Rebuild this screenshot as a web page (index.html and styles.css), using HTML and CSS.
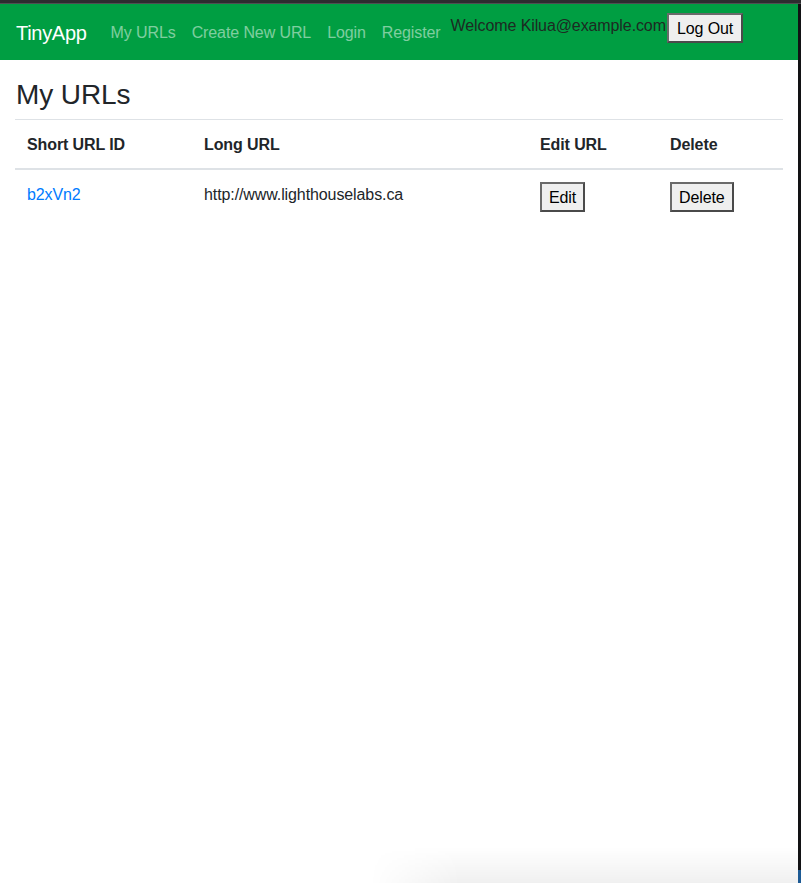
FILE: index.html
```html
<!DOCTYPE html>
<html lang="en">
<head>
<meta charset="utf-8">
<title>TinyApp - My URLs</title>
<link rel="stylesheet" href="styles.css">
</head>
<body>
<div class="window">
  <div class="titlebar"></div>
  <div class="content-row">
    <div class="page">
      <nav class="navbar">
        <a class="brand" href="#">TinyApp</a>
        <ul class="nav-links">
          <li><a href="#">My URLs</a></li>
          <li><a href="#">Create New URL</a></li>
          <li><a href="#">Login</a></li>
          <li><a href="#">Register</a></li>
        </ul>
        <div class="user">
          <span class="welcome">Welcome Kilua@example.com</span>
          <form class="inline-form"><button type="button" class="btn">Log Out</button></form>
        </div>
      </nav>
      <main class="container">
        <h3 class="title">My URLs</h3>
        <table class="url-table">
          <colgroup>
            <col class="c1"><col class="c2"><col class="c3"><col class="c4">
          </colgroup>
          <thead>
            <tr>
              <th>Short URL ID</th>
              <th>Long URL</th>
              <th>Edit URL</th>
              <th>Delete</th>
            </tr>
          </thead>
          <tbody>
            <tr>
              <td><a class="short-link" href="#">b2xVn2</a></td>
              <td>http://www.lighthouselabs.ca</td>
              <td><form class="inline-form"><button type="button" class="btn">Edit</button></form></td>
              <td><form class="inline-form"><button type="button" class="btn">Delete</button></form></td>
            </tr>
          </tbody>
        </table>
      </main>
    </div>
    <div class="edge"><div class="edge-blue"></div></div>
  </div>
  <div class="shadow"></div>
</div>
</body>
</html>
```
FILE: styles.css
```css
* { box-sizing: border-box; }
html, body { margin: 0; padding: 0; }
body {
  font-family: "Liberation Sans", Arial, sans-serif;
  font-size: 16px;
  line-height: 1.5;
  color: #212529;
  background: #fff;
  letter-spacing: -0.1px;
}
.window {
  position: relative;
  height: 883px;
  display: flex;
  flex-direction: column;
  overflow: hidden;
}
.titlebar {
  height: 4px;
  background: #2d2d2f;
  border-bottom: 1px solid #4f4f52;
  flex: none;
}
.content-row {
  flex: 1;
  display: flex;
}
.page {
  flex: 1;
  background: #fff;
}
.edge {
  width: 3px;
  background: #121214;
  display: flex;
  flex-direction: column;
  justify-content: flex-end;
}
.edge-blue {
  height: 13px;
  background: #1d5a94;
}
.navbar {
  height: 56px;
  background: #009e42;
  display: flex;
  align-items: center;
  padding: 2px 16px 0 16px;
}
.brand {
  color: #fff;
  font-size: 20px;
  line-height: 30px;
  letter-spacing: -0.3px;
  text-decoration: none;
  margin-right: 16px;
}
.nav-links {
  list-style: none;
  margin: 0;
  padding: 0;
  display: flex;
}
.nav-links a {
  display: block;
  padding: 8px;
  color: rgba(255, 255, 255, 0.5);
  text-decoration: none;
  line-height: 24px;
}
.user {
  align-self: flex-start;
  margin-top: 7px;
  margin-left: 2px;
  display: flex;
  align-items: flex-start;
}
.welcome {
  line-height: 24px;
  padding-top: 1px;
  color: #1d2a22;
}
.inline-form { display: inline; margin: 0; }
.btn {
  font-family: "Liberation Sans", Arial, sans-serif;
  font-size: 16px;
  line-height: 18px;
  letter-spacing: -0.1px;
  color: #000;
  background: #efefef;
  border: 2px solid #4a4a4a;
  border-top-color: #6a6a6a;
  border-left-color: #6a6a6a;
  padding: 5px 7px 3px 7px;
  margin: 0;
  border-radius: 0;
  cursor: pointer;
}
.user .btn { padding-left: 8px; padding-right: 8px; margin-left: 1px; }
.container {
  padding: 0 15px;
}
.title {
  font-size: 28px;
  font-weight: 500;
  line-height: 1.2;
  margin: 18px 0 7px 0;
  padding-left: 1px;
}
.url-table {
  width: 768px;
  border-collapse: collapse;
  table-layout: fixed;
}
.c1 { width: 177px; }
.c2 { width: 336px; }
.c3 { width: 130px; }
.c4 { width: 125px; }
.url-table th, .url-table td {
  padding: 13px 12px 11px 12px;
  text-align: left;
  vertical-align: top;
  border-top: 1px solid #dee2e6;
}
.url-table td .btn { margin-top: -1px; }
.url-table th {
  font-weight: bold;
  border-bottom: 2px solid #dee2e6;
}
.short-link {
  color: #007bff;
  text-decoration: none;
}
.shadow {
  position: absolute;
  left: 370px;
  right: 3px;
  bottom: 0;
  height: 36px;
  background: linear-gradient(to bottom, rgba(0,0,0,0), rgba(0,0,0,0.06));
  -webkit-mask-image: linear-gradient(to right, transparent 0, #000 90px, #000 100%);
  mask-image: linear-gradient(to right, transparent 0, #000 90px, #000 100%);
  pointer-events: none;
}
```
